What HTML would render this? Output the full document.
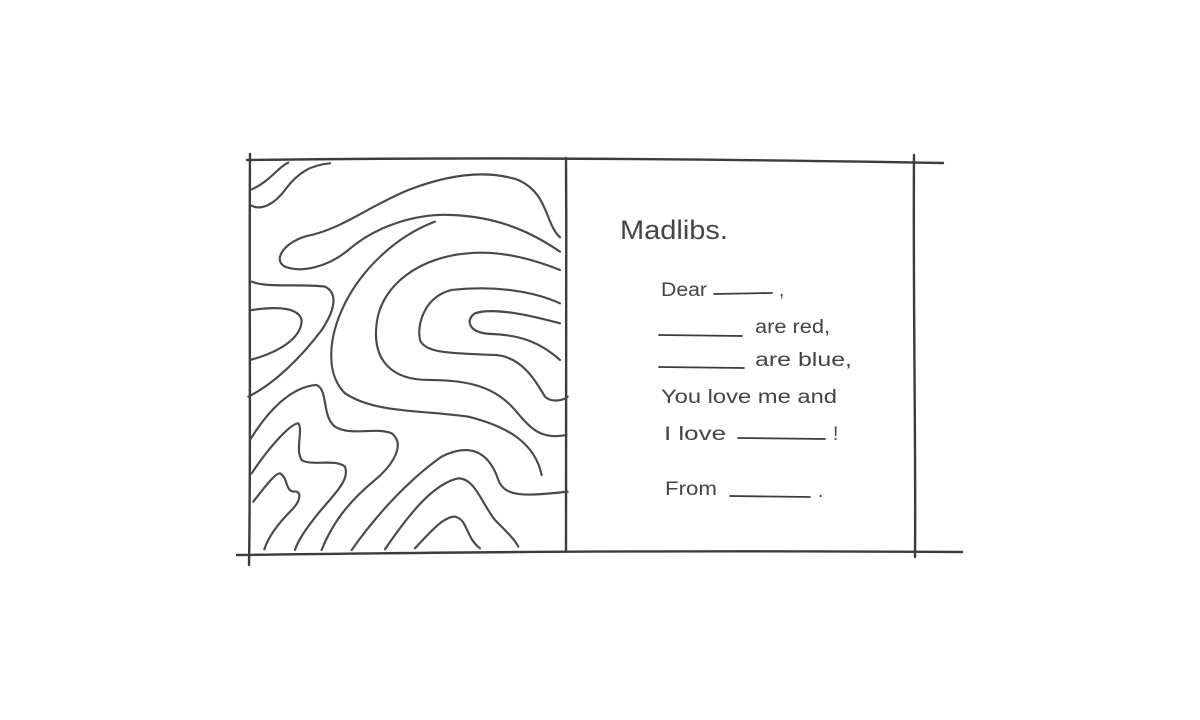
<!DOCTYPE html>
<html><head><meta charset="utf-8"><style>
html,body{margin:0;padding:0;background:#fff;width:1200px;height:720px;overflow:hidden}
svg{display:block}
text{font-family:"Liberation Sans",sans-serif;fill:#454545}
</style></head><body>
<svg width="1200" height="720" viewBox="0 0 1200 720">
<g stroke="#3c3c3c" stroke-width="2.4" fill="none" stroke-linecap="round">
<path d="M247,160 C400,158 600,157 943,163"/>
<path d="M237,555 C400,553 600,550 962,552"/>
<path d="M250,154 C249,300 251,450 249,565"/>
<path d="M566,158 C567,300 565,450 566,551"/>
<path d="M914,155 C913,300 916,450 915,557"/>
</g>
<g transform="translate(235,150) scale(0.3333)" stroke="#4a4a4a" stroke-width="6.5" fill="none" stroke-linecap="round">
<path d="M45,120 C100,100 130,50 160,38"/>
<path d="M45,165 C80,185 120,160 150,120 C190,65 230,45 285,40"/>
<path d="M975,262 C930,220 940,130 850,90 C760,60 650,70 520,120 C400,170 330,230 230,255 C150,270 110,330 150,350 C200,370 280,350 340,300 C420,230 540,190 650,195 C780,200 880,240 975,305"/>
<path d="M975,360 C900,330 800,300 700,310 C560,320 440,400 425,520 C410,640 480,690 580,690 C700,690 780,710 840,780 C890,840 920,870 995,855"/>
<path d="M975,460 C900,425 780,405 650,420 C570,440 545,520 555,570 C570,610 650,610 780,615 C860,620 900,690 930,740 C950,760 990,750 998,740"/>
<path d="M975,520 C900,500 780,470 720,490 C690,510 700,550 770,552 C860,555 920,580 975,630"/>
<path d="M920,975 C900,880 820,830 700,800 C560,780 420,790 330,730 C270,670 280,560 330,460 C380,360 480,260 600,215"/>
<path d="M50,395 C100,415 200,400 270,410 C310,430 300,480 260,540 C200,620 120,700 40,740"/>
<path d="M50,480 C120,470 190,470 200,510 C200,570 120,610 45,630"/>
<path d="M45,870 C100,780 170,710 245,705 C280,720 260,800 300,830 C350,860 420,830 470,850 C510,880 480,940 420,990 C360,1040 300,1100 260,1200"/>
<path d="M50,970 C110,880 170,820 190,820 C205,840 180,900 200,930 C230,950 300,925 330,950 C345,990 300,1030 250,1090 C210,1140 190,1170 180,1200"/>
<path d="M55,1055 C90,1010 120,970 135,970 C160,985 150,1020 175,1025 C200,1020 200,1050 170,1080 C130,1120 100,1160 88,1198"/>
<path d="M350,1200 C420,1100 520,990 620,920 C700,880 760,900 790,990 C810,1040 860,1040 998,1025"/>
<path d="M450,1198 C530,1080 600,1000 670,985 C720,985 740,1060 780,1110 C820,1150 840,1170 850,1190"/>
<path d="M540,1195 C600,1130 630,1100 660,1100 C700,1110 690,1160 735,1195"/>
</g>
<g stroke="#3c3c3c" stroke-width="1.8" fill="none" stroke-linecap="round">
<path d="M714,294 L772,293"/>
<path d="M659,335 L742,336"/>
<path d="M659,367 L744,368"/>
<path d="M738,438 L825,439"/>
<path d="M730,496 L810,497"/>
</g>
<text x="620" y="239" font-size="27" textLength="108" lengthAdjust="spacingAndGlyphs">Madlibs.</text>
<text x="661" y="296" font-size="19" textLength="46" lengthAdjust="spacingAndGlyphs">Dear</text>
<text x="779" y="296" font-size="19">,</text>
<text x="755" y="333" font-size="19" textLength="75" lengthAdjust="spacingAndGlyphs">are red,</text>
<text x="755" y="366" font-size="19" textLength="97" lengthAdjust="spacingAndGlyphs">are blue,</text>
<text x="661" y="403" font-size="19" textLength="176" lengthAdjust="spacingAndGlyphs">You love me and</text>
<text x="664" y="440" font-size="19" textLength="62" lengthAdjust="spacingAndGlyphs">I love</text>
<text x="833" y="440" font-size="19">!</text>
<text x="665" y="495" font-size="19" textLength="52" lengthAdjust="spacingAndGlyphs">From</text>
<text x="818" y="497" font-size="19">.</text>
</svg>
</body></html>
